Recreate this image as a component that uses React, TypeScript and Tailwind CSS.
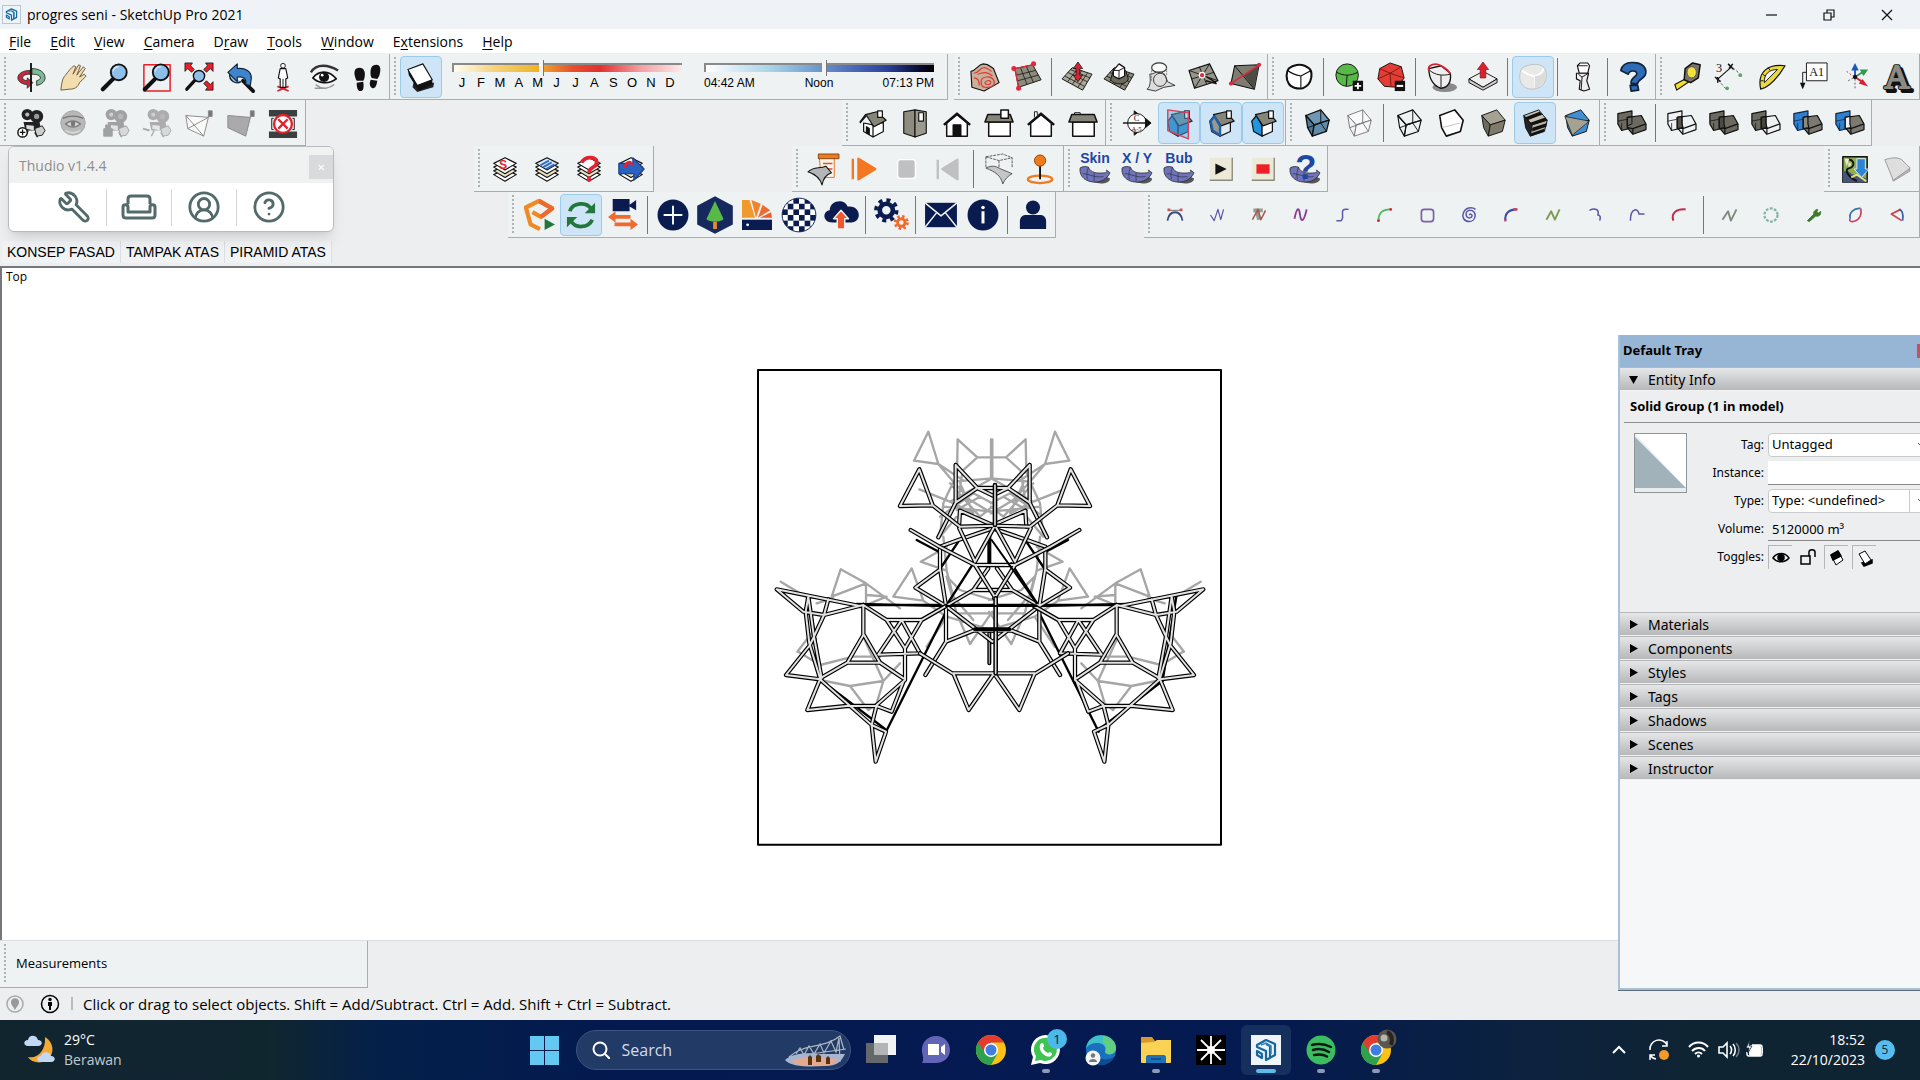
import React, { ReactNode } from "react";
import { Armchair, Wrench, CircleUserRound, CircleHelp } from "lucide-react";

const K = "#111";

function Svg({ children, size = 32 }: { children: ReactNode; size?: number }) {
  return (
    <svg width={size} height={size} viewBox="0 0 32 32" fill="none" strokeLinejoin="round" overflow="visible" aria-hidden="true">
      {children}
    </svg>
  );
}

/* ---------- shared drawing parts ---------- */

const Magnifier = () => (
  <g>
    <path d="M14 18 3 29" stroke={K} strokeWidth="4.5" strokeLinecap="round" />
    <circle cx="20" cy="11" r="8.5" fill="#8dbfe8" stroke={K} strokeWidth="2" />
    <path d="M14 10a6 6 0 0 1 6-5" stroke="#cfe6f8" strokeWidth="1.5" />
  </g>
);

const Reel = ({ c = "#222" }: { c?: string }) => (
  <g>
    <circle cx="12" cy="7" r="6" fill={c} />
    <circle cx="22" cy="9" r="7" fill={c} />
    <circle cx="12" cy="7" r="2.2" fill="#bbb" />
    <circle cx="22" cy="9" r="2.8" fill="#999" />
    <path d="M8 15h17l2 9H10z" fill={c} />
    <path d="M11 18l8 1v5l-8-2z" fill="#ddd" />
    <path d="M20 22l8-3 3 5-3 5-6 1z" fill="#ccc" stroke={c} />
    <path d="M13 24l-3 6m10-4 3 5" stroke={c} strokeWidth="1.5" />
  </g>
);

function Cube({ top, left, right, stroke = K, back = false, w = 1.4 }: { top: string; left: string; right: string; stroke?: string; back?: boolean; w?: number }) {
  return (
    <g stroke={stroke} strokeWidth={w}>
      <path d="M4 8 20 2 29 13 13 18z" fill={top} />
      <path d="M4 8 13 18 11 30 6 21z" fill={left} />
      <path d="M13 18 29 13 26 25 11 30z" fill={right} />
      {back && <path d="M6 21 20 16 20 2M20 16 26 25" strokeWidth="1" />}
    </g>
  );
}

function Solids({ a, b, mid, sa = K, sb = K }: { a: string; b: string; mid?: string; sa?: string; sb?: string }) {
  return (
    <g strokeWidth="1.3">
      <path d="M2 6 17 3v14l1 4-12 3-4-7z" fill={a} stroke={sa} />
      <path d="M2 14 17 11M6 24V16" stroke={sa} strokeWidth="0.8" />
      <path d="M12 10 27 8 32 17v6l-14 5-6-7z" fill={b} stroke={sb} />
      <path d="M12 21 18 22 32 17M18 22v6" stroke={sb} />
      {mid ? <path d="M12 10 17 9v8l1 4-6 1z" fill={mid} stroke={K} /> : <path d="M12 10 17 9v8l-5 2z" stroke={K} strokeWidth="1" />}
    </g>
  );
}

const IsoHouse = ({ wall = "#fff", side = "#fff", roof = "#85857a", line = K }) => (
  <g stroke={line} strokeWidth="1.3">
    <path d="M4 14 9 8 15 19v11l-9-5z" fill={wall} />
    <path d="M15 19 26 14v11l-11 5z" fill={side} />
    <path d="M8 7 21 4 30 14 16 19z" fill={roof} />
    <path d="M22 3h5v8h-5z" fill="#fff" />
  </g>
);

const Skin = ({ label, children }: { label?: string; children?: ReactNode }) => (
  <g>
    <path d="M8 27c8 6 24 6 24-1l-8-4z" fill="#555" />
    <path d="M0 15c3-2 6-2 9-1 2 6 9 7 18 6 2 0 2-2 1-3l4 3c-3 7-10 10-16 10C7 30-1 25 0 15z" fill="#6f74bd" stroke="#222" strokeWidth="0.8" />
    <path d="M3 21c7 0 13 5 22 3M9 14c-2 5-2 10-1 13m7-7v9" stroke="#222" strokeWidth="0.6" />
    {label && (
      <text x="16" y="10" textAnchor="middle" fontSize="15" fontWeight="bold" fill="#1d47a5" fontFamily="Liberation Sans, sans-serif">
        {label}
      </text>
    )}
    {children}
  </g>
);

const Layers = ({ top, children }: { top: string; children?: ReactNode }) => (
  <g stroke={K} strokeWidth="1.2">
    {[24, 20, 16, 12].map((y) => (
      <path key={y} d={`M4 ${y - 2} 16 ${y - 8} 28 ${y - 2} 16 ${y + 5}z`} fill={y === 12 ? top : y === 20 ? "#e9e0c4" : "#fff"} />
    ))}
    {children}
  </g>
);

const Grid = ({ fill = "#8d8b7c" }) => (
  <g stroke={K} strokeWidth="1">
    <path d="M0 18 11 6l21 7-10 17z" fill={fill} />
    <path d="m3 15 21 11M6 11l21 10M9 8l21 9M6 21l10-13M11 24l10-15M17 27l10-15" strokeWidth="0.8" />
  </g>
);

const House = ({ children, roof }: { children?: ReactNode; roof?: boolean }) => (
  <g stroke={K} strokeWidth="1.6">
    {roof ? (
      <>
        <path d="M5 15h23v15H5z" fill="#fff" />
        <path d="M4 7h24l3 8H1z" fill="#85857a" />
      </>
    ) : (
      <>
        <path d="M5 16 16 7l11 9v14H5z" fill="#fff" />
        <path d="M2 18 16 6l14 12" strokeWidth="2.6" />
      </>
    )}
    {children}
  </g>
);

/* ---------- icon library ---------- */

const R = "#d92231";
const NAVY = "#0a1c4f";
const curve = { stroke: "#5a57a8", strokeWidth: 1.6 };

const I: Record<string, ReactNode> = {
  Orbit: (
    <>
      <path d="M15 9C8 9 2 12 2 17c0 4 5 7 10 7v4l6-6-6-5v3c-3 0-5-2-5-3 0-3 4-4 8-4z" fill="#c4283c" stroke="#333" />
      <path d="M17 7c8 0 14 4 14 10 0 3-3 7-9 8v-5c3-1 4-2 4-3 0-3-4-4-9-4z" fill="#79bd97" stroke="#333" />
      <path d="M16 1v31" stroke={K} strokeWidth="2" />
    </>
  ),
  Pan: <path d="M3 30c1-6 1-12 5-16 3-4 6-8 9-10l2 1-3 8 6-10 2 1-4 10 7-9 2 2-6 9 5-3 2 2-7 7c-2 5-5 7-11 7z" fill="#f3dcae" stroke="#6b5a3c" />,
  Zoom: <Magnifier />,
  "Zoom Window": (
    <>
      <path d="M2 3h28v28H2z" stroke="#e8202a" strokeWidth="1.6" />
      <Magnifier />
    </>
  ),
  "Zoom Extents": (
    <>
      <path d="M12 19 3 29" stroke={K} strokeWidth="3.500" strokeLinecap="round" />
      <circle cx="16" cy="15" r="6" fill="#8dbfe8" stroke={K} strokeWidth="1.5" />
      {[[1, 1, 1, 1], [31, 1, -1, 1], [31, 30, -1, -1]].map(([x, y, a, b], i) => (
        <path key={i} transform={`translate(${x} ${y}) scale(${a} ${b})`} d="M0 0h8L6 3l4 4-3 3-4-4-3 3z" fill="#e8202a" stroke={K} strokeWidth="0.8" />
      ))}
    </>
  ),
  Previous: (
    <>
      <path d="M18 20l11 11" stroke={K} strokeWidth="4" strokeLinecap="round" />
      <path d="M4 13a8 8 0 0 0 12 8" stroke="#123" strokeWidth="1.5" fill="#8dbfe8" />
      <path d="M2 11 12 2v5c9-1 15 3 15 10l-1 8-5-1c1-6-2-9-9-8v5z" fill="#3d85cf" stroke="#123" strokeWidth="1.2" />
    </>
  ),
  "Position Camera": (
    <>
      <path d="m10 26 12 5M22 26l-12 5" stroke={R} strokeWidth="1.8" />
      <circle cx="16" cy="4" r="2.5" fill="#fff" stroke={K} />
      <path d="M13 7h6l2 10-2 1v9h-6v-9l-2-1z" fill="#fff" stroke={K} strokeWidth="1.2" />
      <path d="M16 18v9" stroke={K} />
    </>
  ),
  "Look Around": (
    <>
      <path d="M1 11C7 1 20 3 30 9" stroke="#333" strokeWidth="2.5" />
      <path d="M3 17C9 9 20 8 28 18 20 24 9 23 3 17z" fill="#fff" stroke={K} strokeWidth="1.8" />
      <circle cx="15" cy="16" r="5.4" fill={K} />
      <circle cx="13" cy="14" r="1.4" fill="#fff" />
      <path d="M6 24c6 5 13 5 20 0M5 28h13" stroke="#999" strokeWidth="1.4" />
    </>
  ),
  Walk: (
    <path d="M4 18C1 10 3 6 8 6s7 5 5 12l-1 2H5zM5 22l7-1c1 7 0 10-3 10s-4-4-4-9zM20 15c-1-8 1-12 6-12s5 6 3 12l-2 3-6-1zM20 19l7 1c-1 6-2 8-5 8-3-1-4-5-2-9z" fill={K} />
  ),
  "Show Shadows": (
    <>
      <path d="m8 22 22 0-1 5-17 5-5-5z" fill="#222" />
      <path d="M2 8 18 2 28 19 12 25z" fill="#fff" stroke={K} strokeWidth="1.2" />
      <path d="M12 25 28 19v5l-14 7zM2 8l10 17 1 5L3 14z" fill={K} />
    </>
  ),
  "From Contours": (
    <>
      <path d="M1 10C7 9 8 3 14 2c6 0 8 3 11 5l6 15-16 9-13-4z" fill="#c9b09d" stroke={K} strokeWidth="1.2" />
      <path d="M4 12c6 0 6-6 11-6 4 0 6 3 8 4M4 17c4 0 6 2 6 8m-2-12c5-1 9-4 16 2M12 22c-1-7 10-8 13-3s-2 9-8 8c-3 0-5-2-5-5zm4 0c1-2 5-3 6-1s-1 3-3 3-3-1-3-2z" stroke="#e23b33" strokeWidth="1.3" />
    </>
  ),
  "From Scratch": (
    <>
      <path d="M3 7 22 3l9 16-24 8z" fill="#8d8b7c" stroke={K} />
      <path d="m5 14 20-5M6 20l22-6M9 6l7 18M15 4l8 18" stroke={K} strokeWidth="0.8" />
      <path d="M22 3 3 7l4 20" stroke="#e2283a" strokeWidth="1.4" />
      <circle cx="23" cy="2" r="2.7" fill="#e2283a" />
      <circle cx="2" cy="7" r="2.7" fill="#e2283a" />
      <circle cx="7" cy="28" r="2.7" fill="#e2283a" />
    </>
  ),
  Smoove: (
    <>
      <Grid fill="#a9a797" />
      <path d="M17 0l5 7h-3v7h3l-5 7-5-7h3V7h-3z" fill={R} stroke={K} strokeWidth="0.8" />
    </>
  ),
  Stamp: (
    <>
      <Grid />
      <path d="M7 19c4 6 17 6 19-1l-3-9H10z" fill="#6c6a5e" stroke={K} />
      <path d="M10 9l6-7 6 4v9l-6 3-6-3z" fill="#fff" stroke={K} strokeWidth="1.3" />
      <path d="M16 9l6-3M16 9v9M16 9l-6 0" stroke={K} />
    </>
  ),
  Drape: (
    <>
      <path d="M4 13c5 0 6-3 11-3 5 1 6 6 8 11l8 4-12 2-9 4-9-2c4-2 4-11 3-16z" fill="#ddd" stroke="#333" />
      <ellipse cx="14" cy="6" rx="8" ry="5" fill="#fff" fillOpacity="0.6" stroke="#333" strokeWidth="1.3" />
      <path d="M6 6v14m16-14v8" stroke="#777" strokeDasharray="2 1" />
      <ellipse cx="15" cy="19" rx="7" ry="7" stroke="#333" />
    </>
  ),
  "Add Detail": (
    <>
      <path d="M1 9 23 2l9 18-25 8z" fill="#97958a" stroke={K} strokeWidth="1.2" />
      <path d="M1 9 32 20M23 2 7 28M4 18l24-7M12 5l8 19" stroke={K} strokeWidth="0.9" />
      <circle cx="15" cy="14" r="3.6" fill="#fff" />
      <circle cx="15" cy="14" r="2.2" fill="#e2283a" />
      <path d="M19 20l11 3-6-5M20 16l10 6" stroke={K} strokeWidth="1.5" />
    </>
  ),
  "Flip Edge": (
    <>
      <path d="M5 4 31 3 26 29 1 23z" fill="#7e7c70" stroke={K} strokeWidth="1.2" />
      <path d="M31 3 26 29 15 14z" fill="#4c4b44" />
      <path d="M5 4 26 29" stroke={K} />
      <path d="M1 23 31 3" stroke="#e2283a" strokeWidth="1.6" />
      <circle cx="31" cy="3" r="2.200" fill="#e2283a" />
      <circle cx="1" cy="23" r="2.200" fill="#e2283a" />
    </>
  ),
  "Outer Shell": (
    <>
      <path d="M5 7c5-4 12-5 17-3 7 3 8 6 7 13-1 6-4 9-9 11-6 1-13-1-15-5-3-5-3-12 0-16z" fill="#fff" stroke={K} strokeWidth="2.2" />
      <path d="M4 9c5 4 9 5 14 6l11-6M18 15v13" stroke={K} strokeWidth="1.2" />
    </>
  ),
  "Add Subdivision": (
    <>
      <circle cx="14" cy="14" r="12" fill="#58b948" stroke={K} />
      <path d="M3 11c7 4 15 4 22 0M14 14l-1 12" stroke={K} />
      <path d="M20 20h11v11H20z" fill={K} />
      <path d="M25.500 22v7M22 25.500h7" stroke="#fff" strokeWidth="2" />
    </>
  ),
  "Remove Subdivision": (
    <>
      <path d="M4 7 15 1l12 4 3 12-7 10-14-1-7-8z" fill="#e43d35" stroke={K} />
      <path d="m4 7 11 5 12-7M15 12l1 14M2 18l13-6 15 5" stroke="#7c1611" />
      <path d="M20 20h11v11H20z" fill={K} />
      <path d="M22 25.500h7" stroke="#fff" strokeWidth="2.200" />
    </>
  ),
  Crease: (
    <>
      <ellipse cx="20" cy="27" rx="13" ry="5" fill="#8a8a8a" />
      <path d="M3 7c0 12 6 19 13 21 8-1 11-7 10-16L16 4z" fill="#eee" stroke={K} strokeWidth="1.400" />
      <path d="M4 9c6 5 13 6 22 4M16 14v13" stroke={K} />
      <path d="M3 9c-2-7 8-8 13-5 4 2 8 4 10 9" stroke={R} strokeWidth="2" />
    </>
  ),
  "Push Pull": (
    <>
      <path d="m1 18 15-8 15 8-15 9z" fill="#eee" stroke={K} />
      <path d="m1 18 15 9 15-9v4l-15 8-15-8z" fill="#ccc" stroke={K} />
      <path d="m16 0 6 8h-3v9h-6V8h-3z" fill={R} stroke="#811" strokeWidth="0.700" />
    </>
  ),
  "Soft Cube": (
    <>
      <path d="M4 7c6-5 18-6 23-2 5 5 4 16-2 21-6 4-16 4-20-1-4-4-4-13-1-18z" fill="#e9e9e7" stroke="#bcc0c2" />
      <path d="M4 9c6 4 12 6 14 6 4 0 9-4 9-8" stroke="#fff" strokeWidth="2" />
      <path d="M18 15v12" stroke="#f8f8f8" strokeWidth="2" />
      <path d="M18 15c5 0 10-3 10-7 3 8 0 18-10 20z" fill="#dcdcda" />
    </>
  ),
  Figure: (
    <>
      <path d="M10 4 13 1h8l2 3-2 8h-9z" fill="#fff" stroke={K} strokeWidth="1.200" />
      <path d="M9 12h13l-2 8 3 9-6 2-5-2 1-9-4-2z" fill="#eee" stroke={K} strokeWidth="1.200" />
      <path d="M11 13l4 3-1 14M15 16l7-4M10 4h11" stroke={K} />
    </>
  ),
  Help3D: (
    <path d="M3 9C5 0 14 0 20 1c9 2 11 8 9 13-2 4-8 5-8 9l-7 0c-1-6 5-7 6-10 1-4-8-5-9 0zM13 25l8 0 1 5-8 1z" fill="#2e6cb5" stroke="#12233a" strokeWidth="1.800" />
  ),
  "Tape Measure": (
    <>
      <path d="M3 24 16 17l2 4-13 9z" fill="#f1dd2b" stroke={K} strokeWidth="1.200" />
      <path d="M14 7 22 1l8 2-2 14-8 5-7-3z" fill="#77756a" stroke={K} strokeWidth="1.600" />
      <ellipse cx="21" cy="11" rx="5" ry="6" fill="#f4e33c" stroke="#555" />
    </>
  ),
  Dimension: (
    <>
      <path d="M3 19 19 5" stroke={K} strokeWidth="1.200" />
      <path d="m1 16 6 5M4 22l0-6M15 2l6 6m-5-1 4-5" stroke={K} strokeWidth="1.600" />
      <path d="m4 19 9 10M20 6l9 8" stroke="#555" strokeDasharray="3 2" />
      <circle cx="14" cy="28" r="2" fill="#5aa469" />
      <circle cx="28" cy="14" r="2" fill="#5aa469" />
      <text x="2" y="11" fontSize="13" fill={K} fontFamily="Liberation Serif, serif">3</text>
    </>
  ),
  Protractor: (
    <>
      <path d="M5 29C1 10 13 2 31 4L25 13C18 22 12 28 5 29z" fill="#ecd93c" stroke={K} strokeWidth="1.300" />
      <path d="M9 22C8 13 14 8 23 8z" fill="#f0f3f5" stroke={K} />
      <path d="M5 20h3M7 13l3 2m3-9 2 3" stroke={K} />
    </>
  ),
  "Text Label": (
    <>
      <path d="M9 1h22v19H9z" fill="#fff" stroke={K} />
      <text x="20" y="15" textAnchor="middle" fontSize="13" fill={K} fontFamily="Liberation Serif, serif">A1</text>
      <path d="M9 11H5v12" stroke={K} />
      <path d="M2 22h6l-3 7z" fill={K} />
    </>
  ),
  Axes: (
    <>
      <path d="M16 16V6" stroke="#2255b8" strokeWidth="2" />
      <path d="m12 9 4-8 4 8z" fill="#2255b8" />
      <path d="m16 16 8-5" stroke="#2f9a4c" strokeWidth="2" />
      <path d="m21 8 9 0-5 7z" fill="#2f9a4c" />
      <path d="m16 16 9 6" stroke={R} strokeWidth="2" />
      <path d="m20 23 10 3-6-8z" fill={R} />
      <path d="M16 18v10M14 17l-7 4" stroke="#555" strokeDasharray="2 2" />
      <path d="m7 10 7 5" stroke={R} strokeDasharray="2 2" />
      <circle cx="16" cy="16" r="2.300" fill={K} />
    </>
  ),
  "3D Text": (
    <>
      <text x="19" y="31" textAnchor="middle" fontSize="37" fill="#111" stroke={K} strokeWidth="4" fontFamily="Liberation Serif, serif">A</text>
      <text x="16" y="28" textAnchor="middle" fontSize="37" fill="#8b8b83" stroke="#111" strokeWidth="4" fontFamily="Liberation Serif, serif">A</text>
      <text x="16" y="28" textAnchor="middle" fontSize="37" fill="#8b8b83" stroke="#8b8b83" strokeWidth="2" fontFamily="Liberation Serif, serif">A</text>
    </>
  ),

  "Create Camera": (
    <>
      <Reel />
      <circle cx="7" cy="26" r="5" fill="#fff" stroke={K} strokeWidth="1.500" />
      <path d="M4 26h6M7 23v6" stroke={K} strokeWidth="1.300" />
    </>
  ),
  "Look Through": (
    <>
      <circle cx="16" cy="16" r="13" fill="#b8b8b8" stroke="#a5a5a5" />
      <path d="M5 11c7-3 15-3 22 0" stroke="#777" strokeWidth="1.500" />
      <path d="M8 17c5-4 11-4 16 0-5 4-11 4-16 0z" stroke="#777" strokeWidth="1.500" fill="#ddd" />
      <circle cx="16" cy="17" r="2.500" fill="#777" />
      <path d="M8 24c5 3 11 3 16 0" stroke="#ddd" strokeWidth="1.500" />
    </>
  ),
  "Lock Camera": (
    <g opacity="0.65">
      <Reel c="#777" />
      <path d="M4 22h9v8H4zM6 22v-4h5v4" fill="#777" stroke="#777" />
    </g>
  ),
  "Show Cameras": (
    <g opacity="0.65">
      <Reel c="#888" />
      <path d="m1 22 7 2" stroke="#888" strokeWidth="2" />
    </g>
  ),
  "Frustum Lines": (
    <g stroke="#888">
      <path d="M2 8 26 10 21 30 4 22z" fill="#fafafa" />
      <path d="M2 8 21 30M4 22l22-12M26 10l3-5" />
      <path d="M26 3h4v6h-4z" fill="#777" />
    </g>
  ),
  "Frustum Volume": (
    <g stroke="#888">
      <path d="M2 8 26 10 21 30 2 21z" fill="#aaa" />
      <path d="M26 10l3-5" />
      <path d="M26 3h4v6h-4z" fill="#777" />
    </g>
  ),
  "Clear Aspect": (
    <>
      <path d="M1 2h30v7H1zM1 25h30v7H1z" fill="#3a4040" />
      <path d="M6 11H4v12h2M26 11h2v12h-2" stroke={K} />
      <circle cx="16" cy="17" r="9.500" fill="#fff" stroke="#e2222e" strokeWidth="2.500" />
      <path d="m11 12 10 10M21 12 11 22" stroke="#e2222e" strokeWidth="2.500" />
    </>
  ),
  Iso: (
    <g stroke={K} strokeWidth="1.300">
      <path d="M6 16v9l10 6V18zM16 31l11-6V15l-11 4z" fill="#fff" />
      <path d="M2 15 8 7l12-3 10 9-13 7L9 8" fill="#85857a" />
      <path d="M9 8 2 16M21 3h5v7h-5z" fill="#fff" />
      <path d="M9 20v6l3 2v-6z" fill={K} />
    </g>
  ),
  Top: (
    <g stroke={K} strokeWidth="1.200">
      <path d="M4 4 16 2v29L4 27z" fill="#8e8c7e" />
      <path d="M16 2l12 2v23l-12 4z" fill="#9c9a8c" />
      <path d="M20 5h5v9h-5z" fill="#fff" />
    </g>
  ),
  Front: (
    <House>
      <path d="M12 18h8v12h-8z" fill={K} />
    </House>
  ),
  Right: (
    <House roof>
      <path d="M18 2h8v9h-8z" fill="#fff" />
    </House>
  ),
  Back: (
    <House>
      <path d="M9 10V4h3v4" fill="#fff" strokeWidth="1" />
    </House>
  ),
  Left: (
    <House roof>
      <path d="M7 7V5h6v2" strokeWidth="1" />
    </House>
  ),
  "Section Plane": (
    <g stroke={K}>
      <path d="M13 3l9 7v12l-9 7z" fill={K} />
      <circle cx="16" cy="16" r="10" fill="#fff" />
      <path d="M1 16h28" strokeWidth="1.500" />
      <path d="M25 11l6 5-6 5z" fill={K} />
      <text x="15.500" y="14" textAnchor="middle" fontSize="9" fill={K} stroke="none" fontFamily="Liberation Serif, serif">C</text>
      <text x="15.500" y="24" textAnchor="middle" fontSize="7" fill={K} stroke="none" fontFamily="Liberation Serif, serif">A-5</text>
    </g>
  ),
  "Display Planes": (
    <>
      <IsoHouse wall="#3d8fcb" side="#3d8fcb" roof="#6f8f9c" line="#234" />
      <path d="M4 2 26 5v28L4 24z" fill="#4aa2dd" fillOpacity="0.350" stroke="#d9435a" strokeWidth="1.500" />
    </>
  ),
  "Display Cuts": (
    <>
      <IsoHouse side="#dfeaf2" />
      <path d="M5 14 9 9 15 19v10l-8-5z" fill="#9a988c" stroke="#1d5fae" strokeWidth="2.500" />
    </>
  ),
  "Display Fill": <IsoHouse wall="#1e96e0" side="#fff" />,
  "X-Ray": <Cube top="#6d97b2" left="#4d7b99" right="#5f8cab" back />,
  "Back Edges": <Cube top="#fafafa" left="#f4f4f4" right="#f8f8f8" stroke="#777" back w={1} />,
  Wireframe: <Cube top="none" left="none" right="none" back w={1.2} />,
  "Hidden Line": (
    <>
      <path d="M4 8 20 2 29 13 26 25 11 30 6 21z" fill="#fff" stroke={K} strokeWidth="1.700" />
      <path d="m6 21 20-5" stroke="#aaa" strokeWidth="0.700" />
    </>
  ),
  Shaded: <Cube top="#a5a291" left="#6d6b5e" right="#7e7b6c" w={1} />,
  Textured: (
    <>
      <Cube top="#c9c2b2" left="#222" right="#b9b2a2" w={1} />
      <path d="M5 10 21 4l3 3L8 13zM10 16l17-6 2 3-16 5zM13 21l16-5-1 4-15 5zM12 27l14-5v3l-15 5z" fill={K} />
    </>
  ),
  Monochrome: (
    <>
      <Cube top="#3f8fd2" left="#2e78ba" right="#3f8fd2" w={1} />
      <path d="M3 9 29 14 11 29z" fill="#a5a291" stroke={K} strokeWidth="0.700" />
    </>
  ),
  "Solid Shell": <Solids a="#6c6a60" b="#6c6a60" />,
  Intersect: <Solids a="none" b="none" mid="#55534a" />,
  Union: <Solids a="#6c6a60" b="#6c6a60" mid="#4c4b44" />,
  Subtract: <Solids a="#6c6a60" b="none" mid="#45443e" />,
  Trim: <Solids a="#2f80cf" b="#7c7a70" mid="#8d8b80" sa="#0d2748" />,
  Split: <Solids a="#2f80cf" b="#7c7a70" mid="#f0f3f5" sa="#0d2748" />,

  "Layer Stack": (
    <Layers top="#fff">
      <text x="14" y="16" textAnchor="middle" fontSize="13" fontWeight="bold" fill="#e2222e" stroke="none" fontFamily="Liberation Sans, sans-serif">S</text>
    </Layers>
  ),
  "Layer Info": (
    <Layers top="#dbe8fa">
      <path d="M9 12 18 7M12 14l9-5M15 16l9-5" stroke="#2d69c4" strokeWidth="2" />
    </Layers>
  ),
  "Layer Help": (
    <Layers top="#fff">
      <path d="M8 9c5-8 18-6 16 1-1 5-8 4-8 10m0 4v5" stroke="#e2222e" strokeWidth="4" />
    </Layers>
  ),
  "Layer Export": (
    <Layers top="#fff">
      <path d="M3 10h15V4l12 12-11 12v-7H3z" fill="#2a62c2" stroke="#1a3f88" />
      <path d="M10 14c0-6 7-7 7-2" stroke="#e2222e" strokeWidth="3" />
    </Layers>
  ),
  Script: (
    <>
      <path d="M12 3h16v22H14z" fill="#fbf3ea" stroke="#d8722a" strokeWidth="1" />
      <path d="M11 0h22v5H11z" fill="#ee7c22" stroke="#84400c" />
      <path d="M16 10h10M16 16h10" stroke="#e0502a" strokeWidth="1.600" />
      <path d="M0 19c6-6 12-3 19-6l6 7c-6 2-9 7-10 13-2-7-6-11-15-14z" fill="#b3b5b8" stroke={K} strokeWidth="1.200" />
    </>
  ),
  Play: <path d="M3 5v22M9 5l18 11L9 27z" fill="#f47721" stroke="#f47721" strokeWidth="2.500" />,
  Stop: <path d="M9 6h13a3 3 0 0 1 3 3v14a3 3 0 0 1-3 3H9a3 3 0 0 1-3-3V9a3 3 0 0 1 3-3z" fill="#bfc0c1" stroke="#fff" strokeWidth="1.500" />,
  Rewind: <path d="M4 6v21M25 6v21L9 16z" fill="#bfc0c1" stroke="#bfc0c1" strokeWidth="2.500" />,
  Drop: (
    <g stroke="#555">
      <path d="M2 3 20 0l10 4v10M2 3v12M2 3l14 4 14-3M16 7v12" strokeDasharray="3 1" />
      <path d="M2 15c8-4 12-1 16 1l12 5c-4 2-8 6-10 11-2-9-8-13-18-17z" fill="#c4c6c7" />
    </g>
  ),
  Pin: (
    <>
      <ellipse cx="15" cy="27" rx="13" ry="4" stroke="#f07a1c" strokeWidth="2.500" />
      <path d="M15 12v15" stroke={K} strokeWidth="2" />
      <circle cx="15" cy="7" r="6" fill="#f07a1c" stroke="#8d430a" />
    </>
  ),
  Skin: <Skin label="Skin" />,
  "X/Y": <Skin label="X / Y" />,
  Bub: <Skin label="Bub" />,
  "Run Bubble": (
    <>
      <path d="M4 4h24v24H4z" fill="#ece9d8" />
      <path d="M28 4v24H4" stroke="#8d8b7c" strokeWidth="1.500" />
      <path d="m10 10 12 6-12 6z" fill={K} />
    </>
  ),
  "Stop Bubble": (
    <>
      <path d="M4 4h24v24H4z" fill="#ece9d8" />
      <path d="M28 4v24H4" stroke="#8d8b7c" strokeWidth="1.500" />
      <path d="M9 11h14v10H9z" fill="#ee1f27" />
    </>
  ),
  "Skin Help": (
    <Skin>
      <text x="17" y="27" textAnchor="middle" fontSize="37" fontWeight="bold" fill="#1d47a5" fontFamily="Liberation Sans, sans-serif">?</text>
    </Skin>
  ),
  "Add Location": (
    <>
      <path d="M3 3h26v27H3z" fill="#8fae4f" stroke={K} strokeWidth="1.500" />
      <path d="M3 20c5-6 8 2 12 2l14 4v4H3z" fill="#44557c" />
      <path d="M8 6c8-1 8 8 2 9s-2 9 8 14" stroke={K} strokeWidth="2" />
      <path d="M5 5h5l-3 8zM9 9c4 0 3 4 0 5z" fill="#e8ecd4" />
      <path d="M12 25l6-3 10 7" stroke="#e8e06a" strokeWidth="2" />
      <path d="M18 5h9v11h4l-8 9-8-9h3z" fill="#2f83d4" stroke="#dfeefb" />
    </>
  ),
  "Toggle Terrain": (
    <>
      <path d="M10 20 29 14l1 4-18 11z" fill="#b9b9b9" stroke="#999" />
      <path d="M3 6c7-2 13-3 18 0l9 9-18 13z" fill="#dedede" stroke="#999" />
    </>
  ),

  Enscape: (
    <>
      <path d="M9 13 18 18 30 9 16 1 2 8 7 26 17 31" stroke="#f08a24" strokeWidth="4.500" />
      <path d="M18 18 30 9 16 1" stroke="#ec6a30" strokeWidth="4.500" />
      <path d="M22 20l11 6-11 6z" fill="#23773a" />
    </>
  ),
  Sync: (
    <g stroke="#23773a" strokeWidth="4">
      <path d="M4 12c3-9 18-11 23-2M28 21c-4 9-18 10-23 1" />
      <path d="M31 3v11H20zM1 29V18h11z" fill="#23773a" stroke="none" />
    </g>
  ),
  "Sync Camera": (
    <>
      <path d="M5-1h18v13H5zM23 5l7-5v11l-7-4z" fill={NAVY} />
      <path d="M0 18 8 12v4h16v4H8v4zM32 26l-8 6v-4H7v-4h17v-4z" fill="#ee6a2e" />
    </>
  ),
  Add: (
    <>
      <circle cx="16" cy="16" r="16.500" fill={NAVY} />
      <path d="M16 6v20M6 16h20" stroke="#fff" strokeWidth="2" />
    </>
  ),
  "Asset Library": (
    <>
      <path d="M16-4 35 6v20l-19 10-19-10V6z" fill="#16295e" />
      <path d="m16 1 9 19c-1 4-17 4-18 0z" fill="#58b948" />
      <path d="M14 23h4v8h-4z" fill="#e98a2a" />
    </>
  ),
  "Material Editor": (
    <>
      <path d="M0 0h8l6 19H0z" fill="#f09a2e" />
      <path d="m10 0 10 4-5 15z" fill="#f0832e" />
      <path d="m22 5 8 6-13 8z" fill="#ee6a2e" />
      <path d="m31 13 1 6H19z" fill="#ee5a2e" />
      <path d="M0 21h32v11H0z" fill={NAVY} />
      <circle cx="6" cy="26.500" r="1.500" fill="#fff" />
    </>
  ),
  Panorama: (
    <>
      <clipPath id="globe"><circle cx="16" cy="16" r="18" /></clipPath>
      <g clipPath="url(#globe)">
        <path d="M-2-2h36v36H-2z" fill="#fff" />
        {[0, 1, 2, 3, 4, 5].map((r) =>
          [0, 1, 2].map((c) => <rect key={`${r}-${c}`} x={-2 + c * 12 + (r % 2) * 6} y={-2 + r * 6} width="6" height="6" fill={NAVY} />)
        )}
      </g>
      <circle cx="16" cy="16" r="18" stroke={NAVY} />
    </>
  ),
  Upload: (
    <>
      <path d="M7 24C-4 24-4 12 4 11 4 0 20-2 23 7c9-1 12 5 12 9s-3 8-8 8z" fill={NAVY} />
      <path d="m16 11 8 9h-4v11h-8V20H8z" fill="#ee5a2e" stroke="#f0f3f5" strokeWidth="1.500" />
    </>
  ),
  Settings: (
    <>
      <circle cx="11" cy="11" r="7" stroke={NAVY} strokeWidth="5" />
      <circle cx="11" cy="11" r="11" stroke={NAVY} strokeWidth="4" strokeDasharray="4.300 4.300" />
      <circle cx="27" cy="24" r="4" stroke="#ee6a2e" strokeWidth="3" />
      <circle cx="27" cy="24" r="6.500" stroke="#ee6a2e" strokeWidth="3" strokeDasharray="2.600 2.500" />
    </>
  ),
  Feedback: (
    <>
      <path d="M-1 3h34v26H-1z" fill={NAVY} />
      <path d="m-1 3 17 14L33 3M-1 29l12-15M33 29 21 14" stroke="#f0f3f5" strokeWidth="1.600" />
    </>
  ),
  About: (
    <>
      <circle cx="16" cy="16" r="16.500" fill={NAVY} />
      <path d="M16 12v13" stroke="#fff" strokeWidth="3.200" />
      <circle cx="16" cy="8" r="1.900" fill="#fff" />
    </>
  ),
  Account: (
    <>
      <circle cx="16" cy="8" r="7.500" fill={NAVY} />
      <path d="M2 31V23c0-5 3-7 7-7h14c4 0 7 2 7 7v8z" fill={NAVY} />
    </>
  ),

  "Classic Bezier": (
    <>
      <path d="M8 22c2-12 14-12 16 0" {...curve} strokeWidth="2" stroke="#3a4a80" />
      <path d="M9 11h14" stroke="#666" />
      <path d="M8 9h3v3H8zM21 9h3v3h-3z" fill="#c55" />
    </>
  ),
  Polyline: <path d="m9 16 4 6 4-12 3 11 3-11" {...curve} strokeWidth="1.300" />,
  "Edit Bezier": (
    <>
      <path d="M10 11h10M13 9l3 12" stroke="#9a9a92" strokeWidth="4" />
      <path d="m9 21 6-11 3 11 5-10" {...curve} stroke="#a05a50" />
    </>
  ),
  "Uniform Spline": <path d="M9 20c3-14 5-12 6-4s4 8 7-6" {...curve} stroke="#8a3e90" strokeWidth="2" />,
  "Cubic Bezier": <path d="M22 10c-12-2-3 8-8 12H9" {...curve} />,
  "F-Spline": (
    <>
      <path d="M9 22c0-8 4-12 12-12" stroke="#57b868" strokeWidth="1.800" />
      <circle cx="9" cy="22" r="1.500" fill={R} />
      <circle cx="22" cy="10" r="1.500" fill={R} />
    </>
  ),
  "Round Corner": <rect x="10" y="10" width="13" height="13" rx="3" stroke="#7a62a8" strokeWidth="1.800" />,
  Spiral: <path d="M16 16c3-3 5 2 1 3-5 1-6-8 0-8 8 0 7 12-1 12-5 0-8-5-6-9 2-6 9-7 13-4" {...curve} />,
  Arc: (
    <>
      <path d="M10 22c-1-8 4-12 12-12" {...curve} stroke="#3d4aa8" strokeWidth="2.200" />
      <path d="M10 23v-3M19 10h4" stroke="#c8405c" strokeWidth="2.200" />
    </>
  ),
  "Polyline Divider": <path d="m9 21 5-9 4 9 5-11" stroke="#7d9a50" strokeWidth="2" />,
  Catenary: <path d="M10 11c6-3 11-1 9 5 3 0 3 3 2 6" {...curve} />,
  Dome: <path d="M9 22c0-15 9-13 9-7h6" {...curve} />,
  "Red Arc": <path d="M10 22c-3-8 4-13 13-12" stroke="#c22c50" strokeWidth="2.200" />,
  "Zig Zag": <path d="m9 21 6-9 3 10 6-12" stroke="#7b8a7a" strokeWidth="2" />,
  "Circle Nodes": <circle cx="16" cy="16" r="7" stroke="#86b0a8" strokeWidth="2.400" strokeDasharray="3 1.500" />,
  "Spline Wrench": (
    <path d="M10 22 17 15c-1-3 2-5 4-5l-1 3 2 1 2-2c1 4-2 6-5 5l-7 6z" fill="#3e7a2c" stroke="#3e7a2c" />
  ),
  "Closed Curve": (
    <>
      <path d="M11 20C9 14 15 8 22 9" stroke="#3a74a8" strokeWidth="1.800" />
      <path d="M22 9c2 8-3 14-9 14-3 0-3-2-2-3" stroke="#d04060" strokeWidth="1.800" />
    </>
  ),
  Pie: (
    <>
      <path d="M20 10 10 15l11 7" stroke="#d04050" strokeWidth="1.800" />
      <path d="M18 10c4 1 5 6 4 12" stroke="#3a62a8" strokeWidth="1.800" />
    </>
  ),
};

/* ---------- toolbars ---------- */

function Bar({ items, active = [], className = "", children }: { items?: string[]; active?: string[]; className?: string; children?: ReactNode }) {
  return (
    <div role="toolbar" className={`flex h-[46px] shrink-0 items-center border-r border-b border-[#a9adb1] bg-[#eff2f3] pr-px ${className}`}>
      <div className="ml-1 mr-1 h-10 w-0.5 shrink-0 bg-[repeating-linear-gradient(to_bottom,#aeb2b5_0_2px,transparent_2px_4px)]" />
      {items?.map((n, i) =>
        n === "|" ? (
          <div key={i} className="ml-[3px] mr-1 h-[38px] w-px bg-[#777]" />
        ) : (
          <button
            key={i}
            aria-label={n}
            className={`flex h-[42px] w-[42px] items-center justify-center ${active.includes(n) ? "rounded-sm border border-[#9ccbe9] bg-[#cde5f6]" : ""}`}
          >
            <Svg size={30}>{I[n]}</Svg>
          </button>
        )
      )}
      {children}
    </div>
  );
}

const thumb =
  "[&::-webkit-slider-thumb]:h-4 [&::-webkit-slider-thumb]:w-[5px] [&::-webkit-slider-thumb]:appearance-none [&::-webkit-slider-thumb]:border-r [&::-webkit-slider-thumb]:border-[#777] [&::-webkit-slider-thumb]:bg-[#f4f4f4]";

function Toolbars() {
  return (
    <div className="pt-px font-['Liberation_Sans',Arial,sans-serif]">
      <div className="flex">
        <Bar items={["Orbit", "Pan", "Zoom", "Zoom Window", "Zoom Extents", "Previous", "Position Camera", "Look Around", "Walk"]} />
        <Bar items={["Show Shadows"]} active={["Show Shadows"]}>
          <div className="ml-2.5 flex w-[230px] flex-col">
            <input
              type="range" aria-label="Month" defaultValue="38"
              className={`h-[9px] w-full appearance-none border-t-2 border-l-2 border-[#8a8a8a] bg-[linear-gradient(90deg,#fffdf0,#f5d27a_18%,#f0b428_36%,#e8502c_52%,#e23030_64%,#f3a0a4_82%,#fdeaea)] ${thumb}`}
            />
            <div className="mt-[3px] flex justify-between pr-1.5 pl-1 text-[13px] leading-4">
              {"JFMAMJJASOND".split("").map((m, i) => (
                <span key={i} className="w-3 text-center">{m}</span>
              ))}
            </div>
          </div>
          <div className="ml-[22px] mr-3 flex w-[230px] flex-col">
            <input
              type="range" aria-label="Time of day" defaultValue="52"
              className={`h-[9px] w-full appearance-none border-t-2 border-l-2 border-[#8a8a8a] bg-[linear-gradient(90deg,#fff,#a8d4ea_28%,#6f9bd0_48%,#4a68b8_65%,#2a3f98_80%,#070a2c_94%,#000)] ${thumb}`}
            />
            <div className="mt-[3px] grid grid-cols-3 text-[12px] leading-4">
              <span>04:42 AM</span>
              <span className="text-center">Noon</span>
              <span className="text-right">07:13 PM</span>
            </div>
          </div>
        </Bar>
        <Bar className="ml-1.5" items={["From Contours", "From Scratch", "|", "Smoove", "Stamp", "Drape", "Add Detail", "Flip Edge"]} />
        <Bar
          items={["Outer Shell", "|", "Add Subdivision", "Remove Subdivision", "|", "Crease", "Push Pull", "|", "Soft Cube", "|", "Figure", "|", "Help3D"]}
          active={["Soft Cube"]}
        />
        <Bar className="ml-auto" items={["Tape Measure", "Dimension", "Protractor", "Text Label", "Axes", "3D Text"]} />
      </div>
      <div className="flex">
        <Bar items={["Create Camera", "Look Through", "Lock Camera", "Show Cameras", "Frustum Lines", "Frustum Volume", "Clear Aspect"]} />
        <Bar className="ml-[536px]" items={["Iso", "Top", "Front", "Right", "Back", "Left"]} />
        <Bar items={["Section Plane", "Display Planes", "Display Cuts", "Display Fill"]} active={["Display Planes", "Display Cuts", "Display Fill"]} />
        <Bar items={["X-Ray", "Back Edges", "|", "Wireframe", "Hidden Line", "Shaded", "Textured", "Monochrome"]} active={["Textured"]} />
        <Bar items={["Solid Shell", "|", "Intersect", "Union", "Subtract", "Trim", "Split"]} />
      </div>
      <div className="flex">
        <Bar className="ml-[474px]" items={["Layer Stack", "Layer Info", "Layer Help", "Layer Export"]} />
        <Bar className="ml-[138px]" items={["Script", "Play", "Stop", "Rewind", "|", "Drop", "Pin"]} />
        <Bar items={["Skin", "X/Y", "Bub", "Run Bubble", "Stop Bubble", "Skin Help"]} />
        <Bar className="ml-auto" items={["Add Location", "Toggle Terrain"]} />
      </div>
      <div className="flex">
        <Bar
          className="ml-[508px]"
          items={["Enscape", "Sync", "Sync Camera", "|", "Add", "Asset Library", "Material Editor", "Panorama", "Upload", "|", "Settings", "|", "Feedback", "About", "|", "Account"]}
          active={["Sync"]}
        />
        <Bar
          className="ml-auto"
          items={["Classic Bezier", "Polyline", "Edit Bezier", "Uniform Spline", "Cubic Bezier", "F-Spline", "Round Corner", "Spiral", "Arc", "Polyline Divider", "Catenary", "Dome", "Red Arc", "|", "Zig Zag", "Circle Nodes", "Spline Wrench", "Closed Curve", "Pie"]}
        />
      </div>
      <nav aria-label="Scenes" className="flex h-[28px] items-start pt-[3px] pl-0.5 text-[14px]">
        {["KONSEP FASAD", "TAMPAK ATAS", "PIRAMID ATAS"].map((t) => (
          <button key={t} className="h-[22px] border-r border-[#dcdfe1] bg-[#f0f2f3] px-[5px]">{t}</button>
        ))}
      </nav>
    </div>
  );
}

/* ---------- 3D model ---------- */

const faceHalf = "M538 358 480 468 578 466zM578 466 660 530 765 527M512 540 598 590 705 645H765M705 645 767 745M658 535 705 635 762 532";
const hornHalf = "M647 345V458L595 562M647 345 712 414H757M712 414 647 458M712 414 757 436M660 482 757 525M660 482 657 530";
const bodyHalf =
  "M600 590V655L618 768M598 660 526 713 618 768 700 720H757M600 590 655 570 757 535M618 768 757 875M618 768V875L556 975M618 875 700 842H757M700 720 745 655";
const baseHalf = "M762 970H640L686 1080 762 970M640 972 540 910";
const wingHalf =
  "M360 768 110 718 190 785 252 795 265 748M252 795 370 765M205 740 197 785 208 880 240 985M252 795 210 885 138 975 240 988 202 1080 320 1068 410 1068 455 1085 490 995M205 740 222 860 245 985M370 765V855L322 938 240 985M322 938H420L372 855M420 938 490 985M370 765 440 810H545L618 768M545 810 495 895V990L410 1065 395 1125 240 988M395 1125 407 1235 438 1145zM540 910 485 810 415 914zM440 810 495 895";
const ghostTop =
  "M565 245 522 332 595 342zM595 342 640 395 610 460 600 560M595 342 668 390M653 268 651 370M653 268 712 322H757M712 322 668 362M757 268V385L640 395M538 418 630 455 757 385M610 470 757 485M630 400 720 500 757 470M668 362 650 480 720 440M640 395 690 450 757 490M600 500 700 430 757 460M630 455 700 490 660 400M600 560 650 500M620 590 542 635 620 662 640 740M610 560 620 662";
const ghostLow =
  "M302 658 275 740 378 700zM378 700V765L440 740 380 735M378 700 480 775M515 655 460 740 550 752zM550 752 620 800 560 890M122 695 200 742 280 745M172 905 215 850M175 905 240 945 340 920H420M240 990 330 1008 430 993 410 1060 385 1080 330 1008M370 860 430 993M620 680 650 790 690 882 757 785M620 680 660 720 757 750M650 790H757M620 800 757 840M640 740 700 810M430 993 480 940M280 745 230 760";
const darkHalf = "M350 765H757M350 762 618 768M618 785 438 1145M240 988 435 1137M205 740 245 985M700 838H757M618 768 700 640M598 660 655 575M530 570 598 606";

function Half({ d, c, outer = "#000", inner }: { d: string; c: number; outer?: string; inner?: string }) {
  return (
    <g>
      {[undefined, `translate(${2 * c} 0) scale(-1 1)`].map((t, i) => (
        <path key={i} transform={t} d={d} stroke={outer} strokeWidth={inner ? 13 : 7} />
      ))}
      {inner &&
        [undefined, `translate(${2 * c} 0) scale(-1 1)`].map((t, i) => (
          <path key={i} transform={t} d={d} stroke={inner} strokeWidth="6" />
        ))}
    </g>
  );
}

function Model() {
  return (
    <svg width="500" height="510" viewBox="0 0 1500 1530" fill="none" strokeLinejoin="round" strokeLinecap="round" role="img" aria-label="Top view of model">
      <Half d={ghostTop} c={755} outer="#a6a6a6" />
      <Half d={ghostLow} c={752} outer="#a6a6a6" />
      <Half d={darkHalf} c={757} />
      <path d="M748 850V940M748 560V640" stroke="#000" strokeWidth="12" />
      <path d="M748 850V940" stroke="#999" strokeWidth="4" />
      <Half d={bodyHalf} c={758} inner="#e2e2e2" />
      <Half d={wingHalf} c={750} inner="#e2e2e2" />
      <Half d={baseHalf} c={762} inner="#e2e2e2" />
      <Half d={hornHalf} c={758} inner="#e2e2e2" />
      <Half d={faceHalf} c={765} inner="#e2e2e2" />
      <path d="M765 405V525M767 745V970" stroke="#000" strokeWidth="14" />
      <path d="M765 405V525M767 745V970" stroke="#ddd" strokeWidth="5" />
      <path d="M755 570 890 760M618 768H890" stroke="#000" strokeWidth="6" />
      <path d="M705 838H808" stroke="#000" strokeWidth="12" />
      <rect x="54" y="60" width="1389" height="1424" stroke="#000" strokeWidth="6" />
    </svg>
  );
}

/* ---------- Default Tray ---------- */

function TrayHeader({ title, open }: { title: string; open?: boolean }) {
  return (
    <button className="flex h-[24px] w-full items-center gap-2.5 border-t border-b border-t-[#b4b6b8] border-b-[#f2f2f2] bg-linear-to-b from-[#e6e7e8] to-[#b7b8b9] pl-[9px] text-left text-[14px]">
      <svg width="9" height="9" viewBox="0 0 9 9" aria-hidden="true">
        <path d={open ? "M0 1h9L4.500 9z" : "M1 0 9 4.500 1 9z"} />
      </svg>
      {title}
    </button>
  );
}

function TraySelect({ id, value, boxed }: { id: string; value: string; boxed?: boolean }) {
  return (
    <div className="relative h-6">
      <select id={id} className="h-full w-full appearance-none rounded-sm border border-[#c8cacc] bg-white pl-[3px] text-[13px]">
        <option>{value}</option>
      </select>
      <span className={`pointer-events-none absolute inset-y-0 right-0 flex w-[27px] items-center justify-center ${boxed ? "border border-[#c8cacc]" : ""}`}>
        <svg width="9" height="7" viewBox="0 0 9 7" fill="none" aria-hidden="true">
          <path d="m0 1 4.500 4.500L9 1" stroke="#555" />
        </svg>
      </span>
    </div>
  );
}

function Tray() {
  return (
    <aside className="absolute top-[335px] -right-4 z-10 flex h-[655px] w-[318px] flex-col border-l-2 border-b-2 border-[#a9c0d6] bg-[#f5f7f8] font-['Noto_Sans',sans-serif] shadow-[0_1px_0_#5b6b78]">
      <div className="flex h-8 shrink-0 items-center justify-between bg-[#97b5d5] pr-[3px] pl-[3px]">
        <h2 className="text-[13px] font-bold">Default Tray</h2>
        <button aria-label="Close tray" className="h-3.5 w-4 bg-[#c9505a]" />
      </div>
      <TrayHeader title="Entity Info" open />
      <section className="h-[221px] shrink-0 bg-[#edeef0]">
        <h3 className="ml-1 flex h-8 items-center border-b border-[#8c8f92] pl-1.5 text-[13px] font-bold">Solid Group (1 in model)</h3>
        <div className="flex pt-2.5 pl-3.5">
          <div className="h-[60px] w-[53px] shrink-0 border border-[#8f9498] bg-[#e8eef0]">
            <svg width="51" height="54" viewBox="0 0 51 54" aria-hidden="true">
              <path d="M0 0h51v54z" fill="#fff" />
              <path d="M0 3v51h51z" fill="#a1b2bb" />
            </svg>
          </div>
          <div className="grid grow grid-cols-[77px_1fr] items-center gap-x-1 gap-y-1 text-[12px]">
            <label htmlFor="tag" className="text-right">Tag:</label>
            <TraySelect id="tag" value="Untagged" />
            <label htmlFor="instance" className="text-right">Instance:</label>
            <input id="instance" className="h-6 w-full border-b border-[#888] bg-white px-1" />
            <label htmlFor="type" className="text-right">Type:</label>
            <TraySelect id="type" value="Type: <undefined>" boxed />
            <label htmlFor="volume" className="text-right">Volume:</label>
            <input id="volume" readOnly defaultValue="5120000 m³" className="h-6 w-full border-b border-[#888] bg-[#edeef0] px-1 text-[13px]" />
            <span className="text-right">Toggles:</span>
            <div className="flex gap-1">
              {["Hidden", "Locked", "Receive shadows", "Cast shadows"].map((n, i) => (
                <button key={n} aria-label={n} className={`flex h-6 w-6 items-center justify-center ${i === 1 ? "" : "border-t border-l border-[#b4b6b8]"}`}>
                  <svg width="18" height="18" viewBox="0 0 18 18" fill="none" stroke="#000" strokeWidth="1.500" aria-hidden="true">
                    {i === 0 && <><path d="M1 9c4-6 12-6 16 0-4 5-12 5-16 0z" /><circle cx="9" cy="8.500" r="3" fill="#000" /></>}
                    {i === 1 && <path d="M2 8h9v8H2zM10 8V4c0-3 6-3 6 0v5" />}
                    {i === 2 && <><path d="M3 6 10 2l5 9-7 5z" fill="#fff" strokeWidth="1" /><path d="m3 6 7-4 3 5-8 4z" fill="#000" /></>}
                    {i === 3 && <><path d="m6 14 10-3v3l-8 3z" fill="#000" /><path d="M3 5 9 2l6 9-6 4z" fill="#fff" strokeWidth="1" /></>}
                  </svg>
                </button>
              ))}
            </div>
          </div>
        </div>
      </section>
      {["Materials", "Components", "Styles", "Tags", "Shadows", "Scenes", "Instructor"].map((t) => (
        <TrayHeader key={t} title={t} />
      ))}
    </aside>
  );
}

/* ---------- Thudio floating window ---------- */

function Thudio() {
  return (
    <section className="absolute top-[146px] left-2 z-10 h-[86px] w-[326px] overflow-hidden rounded-md border border-[#b9bcbe] bg-white shadow-lg">
      <div className="flex h-[36px] items-center justify-between bg-[#f0f2f2] pl-2.5 text-[14px] text-[#8e8e8e]">
        Thudio v1.4.4
        <button aria-label="Close" className="mt-1 h-6 w-6 bg-[#d8dadb] text-[10px] text-white">✕</button>
      </div>
      <div className="flex h-[48px] items-center pl-[32px] text-[#536a6b]">
        {[Wrench, Armchair, CircleUserRound, CircleHelp].map((Ico, i) => (
          <button key={i} aria-label={["Tools", "Furniture", "Account", "Help"][i]} className={`flex h-[37px] w-[65px] items-center justify-center ${i ? "border-l border-[#d2d6d8]" : ""}`}>
            {i === 1 ? (
              <svg width="36" height="28" viewBox="0 0 36 28" fill="none" stroke="currentColor" strokeWidth="3" strokeLinejoin="round" aria-hidden="true">
                <path d="M7 11V6c0-2 1-3 3-3h16c2 0 3 1 3 3v5M7 19v-5c0-3-5-3-5 0v8c0 2 1 3 3 3h26c2 0 3-1 3-3v-8c0-3-5-3-5 0v5z" />
              </svg>
            ) : i === 0 ? (
              <Ico size={34} strokeWidth={2} className="-scale-x-100" />
            ) : (
              <Ico size={34} strokeWidth={2} />
            )}
          </button>
        ))}
      </div>
    </section>
  );
}

/* ---------- taskbar ---------- */

const SketchUpMark = ({ size }: { size: number }) => (
  <svg width={size} height={size} viewBox="0 0 30 30" fill="none" aria-hidden="true">
    <path d="M0 0h30v30H0z" fill="#eef4f8" />
    <path d="M6 12v-2l9-5 9 4v11l-9 5v-9l-9-4zM15 9l4 2v11M6 16v4l5 3v-4z" stroke="#17679f" strokeWidth="2.200" strokeLinejoin="round" />
    <path d="M10 10l5-2 5 3v8" stroke="#2b86c4" strokeWidth="1.500" />
  </svg>
);

const Chrome = () => (
  <>
    <circle cx="15" cy="15" r="15" fill="#fbc116" />
    <path d="M2 7.500A15 15 0 0 0 15 30l6.500-11.300L15 15z" fill="#2da14c" />
    <path d="M2 7.500 9 18l6-10.500h13A15 15 0 0 0 2 7.500z" fill="#e33b2e" />
    <circle cx="15" cy="15" r="7" fill="#fff" />
    <circle cx="15" cy="15" r="5.500" fill="#3f7de0" />
  </>
);

const apps: { name: string; dot?: boolean; active?: boolean; art: ReactNode }[] = [
  { name: "Task view", art: <><path d="M0 8h22v20H0z" fill="#66696c" /><path d="M8 0h22v20H8z" fill="#f1f3f5" /><path d="M8 8h14v12H8z" fill="#b2b4b5" /></> },
  { name: "Chat", art: <><path d="M1 28C3 25 2 22 1 17 0 8 6 1 15 1s14 7 14 14-6 13-14 13z" fill="#6264b8" /><path d="M7 9h11v11H7zM20 12l4-3v11l-4-3z" fill="#fff" /></> },
  { name: "Chrome", art: <Chrome /> },
  {
    name: "WhatsApp", dot: true,
    art: (
      <>
        <path d="m0 30 2-8A14.500 14.500 0 1 1 9 28z" fill="#fff" />
        <path d="m4 26 1-5a11.500 11.500 0 1 1 5 4z" fill="#3fc351" />
        <path d="M9 10c2-4 4-1 4 1l-1 2c1 3 3 4 5 5l2-1c2 1 3 2 1 4-5 3-13-5-11-11z" fill="#fff" />
        <circle cx="26" cy="4" r="10" fill="#4db8ea" />
        <text x="26" y="9" textAnchor="middle" fontSize="13" fill="#08203a">1</text>
      </>
    ),
  },
  {
    name: "Edge",
    art: (
      <>
        <circle cx="15" cy="15" r="15" fill="#1a6fc0" />
        <path d="M0 14C1-4 29-4 30 13c0 7-9 8-11 4 2-5-2-9-7-9S2 9 0 14z" fill="#3ec0c8" />
        <path d="M17 1c9 1 13 7 13 12 0 7-9 8-11 4 2-4 1-8-2-9z" fill="#62cf80" />
        <path d="M10 15c0 9 9 12 18 7-3 6-9 9-15 8-6-2-7-11-3-15z" fill="#0f4b91" />
        <circle cx="7" cy="23" r="7.500" fill="#f3f4f5" />
        <circle cx="7" cy="20.500" r="2.200" fill="#777" />
        <path d="M3 27c0-4 8-4 8 0z" fill="#777" />
      </>
    ),
  },
  {
    name: "File Explorer", dot: true,
    art: (
      <>
        <path d="M0 2h11l3 4h16v10H0z" fill="#d99a2b" />
        <path d="M0 8l13-1 3-2h14v22c0 1-1 1-1 1H1s-1 0-1-1z" fill="#fad355" />
        <path d="M5 28v-6c0-1 1-2 2-2h16c1 0 2 1 2 2v6z" fill="#1d72b8" />
        <path d="M10 24h10" stroke="#0d4b80" strokeWidth="1.500" />
      </>
    ),
  },
  {
    name: "Starburst",
    art: (
      <>
        <path d="M0 0h30v30H0z" fill="#000" />
        <path d="M15 1v28M1 15h28M5 5l20 20M25 5 5 25" stroke="#fff" strokeWidth="1.800" />
        <circle cx="15" cy="15" r="4" fill="#fff" />
      </>
    ),
  },
  { name: "SketchUp", active: true, art: <SketchUpMark size={30} /> },
  { name: "Spotify", dot: true, art: <><circle cx="15" cy="15" r="14.500" fill="#3dbd62" /><path d="M6 10c7-2 13-1 19 2M7 15c6-2 11-1 16 2M8 20c5-1 9-1 13 1.500" stroke="#0a1a10" strokeWidth="2.500" strokeLinecap="round" fill="none" /></> },
  { name: "Chrome profile", dot: true, art: <><Chrome /><circle cx="26" cy="4" r="9.500" fill="#5a5650" /><circle cx="23" cy="3" r="3.500" fill="#b8b5aa" /><path d="M26-3c5 2 6 8 4 13" stroke="#2a2420" strokeWidth="4" fill="none" /></> },
];

function Taskbar() {
  return (
    <footer className="grid h-[60px] shrink-0 grid-cols-[1fr_auto_1fr] items-center bg-[linear-gradient(90deg,#11252f_0%,#10262f_14%,#03204a_20%,#04194f_32%,#041a50_66%,#0b2140_78%,#0f2433_88%)] text-white">
      <div className="flex items-center gap-2 pl-6">
        <svg width="32" height="32" viewBox="0 0 32 32" aria-hidden="true">
          <path d="M21 3c10 6 10 19 0 24-6 3-14 1-17-4 10 2 18-7 17-20z" fill="#f4a836" />
          <path d="M4 12c-5 0-5-6 0-6 1-6 9-5 10 0 5 0 5 6 0 6z" fill="#c3d8f5" />
          <path d="M17 28c-5 0-5-6 0-6 1-5 9-5 10 0 5 0 5 6 0 6z" fill="#c3d8f5" />
        </svg>
        <div className="text-[14px] leading-5">
          <div>29°C</div>
          <div className="text-[#c3cad0]">Berawan</div>
        </div>
      </div>
      <div className="flex items-center">
        <button aria-label="Start" className="flex h-[60px] w-[55px] items-center justify-center">
          <svg width="29" height="29" viewBox="0 0 29 29" aria-hidden="true">
            <path d="M0 0h14v14H0zM15 0h14v14H15zM0 15h14v14H0zM15 15h14v14H15z" fill="#63c8f2" />
          </svg>
        </button>
        <label className="mr-[3px] ml-1 flex h-10 w-[275px] items-center overflow-hidden rounded-full border border-[#3d5480] bg-[#223a66] pl-[15px]">
          <svg width="18" height="18" viewBox="0 0 18 18" fill="none" stroke="#fff" strokeWidth="2" aria-hidden="true">
            <circle cx="8" cy="8" r="6.500" /><path d="m13 13 4.500 4.500" strokeLinecap="round" />
          </svg>
          <input aria-label="Search" placeholder="Search" className="ml-3 w-[120px] bg-transparent text-[16px] outline-none placeholder:text-[#d3dbea]" />
          <svg className="ml-auto" width="66" height="34" viewBox="0 0 66 34" fill="none" aria-hidden="true">
            <path d="M1 27c6-6 20-8 30-6h30c-4 8-8 12-20 12-16 1-34 1-40-6z" fill="#a9b4d2" />
            <path d="M8 28c10-5 30-3 46-2-3 6-8 7-20 7-12 0-22 0-26-5z" fill="#e5a98f" />
            <path d="M5 24 62 16M5 24C20 10 40 16 56 3l4 14M12 21l4-6 4 7 5-9 5 8 6-10 4 9 7-12 5 11 3-14 1 24" stroke="#aab8c4" strokeWidth="1.200" />
            <path d="M24 32v-8l2-2 2 2v8zM32 29v-6l2-2 3 2v6zM42 31v-6l2-2 2 2v6z" fill="#57340f" />
          </svg>
        </label>
        {apps.map((a) => (
          <button key={a.name} aria-label={a.name} className="flex h-[60px] w-[55px] items-center justify-center">
            <span className={`relative flex h-[50px] w-[50px] items-center justify-center rounded-md ${a.active ? "bg-[#15305c]" : ""}`}>
              <svg width="30" height="30" viewBox="0 0 30 30" overflow="visible" aria-hidden="true">{a.art}</svg>
              {(a.dot || a.active) && <span className={`absolute bottom-0.5 h-1 rounded-full ${a.active ? "w-5 bg-[#63b9ea]" : "w-2 bg-[#8d99b5]"}`} />}
            </span>
          </button>
        ))}
      </div>
      <div className="flex items-center justify-end pr-[25px]">
        <svg width="152" height="24" viewBox="0 0 152 24" fill="none" stroke="#fff" strokeWidth="2" className="mr-7" aria-hidden="true">
          <path d="m2 15 6-6 6 6" />
          <path d="M39 12a9 9 0 0 1 17-5M56 3v5h-5M45 21a9 9 0 0 1-6-4M39 22v-5h5" strokeWidth="1.500" />
          <circle cx="53" cy="17" r="5" fill="#f59a2c" stroke="none" />
          <path d="M78 9c5-6 14-6 19 0M81 13c4-4 10-4 13 0M84 16c2-2 5-2 7 0" />
          <circle cx="87.500" cy="18" r="1.500" fill="#fff" stroke="none" />
          <path d="M108 9h4l4-4v14l-4-4h-4zM119 8c2 2 2 6 0 8M122 6c3 3 3 9 0 12" strokeWidth="1.600" />
          <path d="M125 5c4 4 4 10 0 14" stroke="#6b7a88" strokeWidth="1.500" />
          <rect x="138" y="7" width="12" height="11" rx="2" fill="#fff" stroke="none" />
          <path d="M141 7h8a2 2 0 0 1 2 2v7a2 2 0 0 1-2 2h-11a2 2 0 0 1-2-2v-2M152 10v5" strokeWidth="1.500" />
          <path d="M139 2 135 10h3l-1 5 4-7h-3z" fill="#fff" stroke="#0f2433" strokeWidth="0.800" />
        </svg>
        <div className="text-right text-[14px] leading-5">
          <div>18:52</div>
          <div>22/10/2023</div>
        </div>
        <span className="ml-2.5 flex h-5 w-5 items-center justify-center rounded-full bg-[#57bdf0] text-[12px] text-[#0d2433]">5</span>
      </div>
    </footer>
  );
}

/* ---------- page ---------- */

const menu: [string, string, string][] = [
  ["", "F", "ile"], ["", "E", "dit"], ["", "V", "iew"], ["", "C", "amera"], ["D", "r", "aw"], ["", "T", "ools"], ["", "W", "indow"], ["E", "x", "tensions"], ["", "H", "elp"],
];

export default function App() {
  return (
    <div className="relative flex min-h-screen flex-col overflow-hidden bg-[#eceef0] font-['Open_Sans','Noto_Sans',sans-serif] text-black">
      <header className="flex h-[29px] items-center bg-[#eff3f8] pr-1 pl-0.5 text-[14px]">
        <span className="mr-1.5 border border-[#b5c6d4]"><SketchUpMark size={17} /></span>
        <h1>progres seni - SketchUp Pro 2021</h1>
        <div className="ml-auto flex">
          {["M1 6h11", "M1 4h7v7H1zM4 4V1h7v7H8", "M1 1l10 10M11 1 1 11"].map((d, i) => (
            <button key={d} aria-label={["Minimize", "Restore", "Close"][i]} className="flex h-[29px] w-[58px] items-center justify-center">
              <svg width="12" height="12" viewBox="0 0 12 12" fill="none" stroke="#111" strokeWidth="1.200" aria-hidden="true"><path d={d} /></svg>
            </button>
          ))}
        </div>
      </header>
      <nav aria-label="Menu" className="flex h-[24px] items-center gap-[19px] bg-white pl-[9px] text-[14px]">
        {menu.map(([a, b, c]) => (
          <button key={a + b + c}>{a}<span className="underline underline-offset-2">{b}</span>{c}</button>
        ))}
      </nav>
      <Toolbars />
      <main className="relative grow border-t-2 border-l-2 border-[#75787b] bg-white">
        <span className="absolute top-0 left-1 text-[12px]">Top</span>
        <div className="absolute top-[82px] left-[738px]"><Model /></div>
      </main>
      <div className="flex h-[48px] shrink-0 border-t border-[#dcdedf]">
        <div className="flex w-[368px] items-center border-r border-b border-[#a9adb1] bg-[#eff2f3] text-[13px]">
          <div className="ml-1 h-10 w-0.5 bg-[repeating-linear-gradient(to_bottom,#aeb2b5_0_2px,transparent_2px_4px)]" />
          <label htmlFor="measurements" className="ml-2.5">Measurements</label>
          <input id="measurements" className="ml-auto h-6 w-[196px] bg-transparent" />
        </div>
      </div>
      <div className="flex h-8 shrink-0 items-center text-[15px]">
        <svg width="76" height="20" viewBox="0 0 76 20" fill="none" className="mr-[7px]" aria-hidden="true">
          <circle cx="15" cy="10" r="8" stroke="#aaa" strokeWidth="1.500" />
          <path d="M15 16c-2-4-4-5-4-8 0-5 8-5 8 0 0 3-2 4-4 8z" fill="#999" />
          <circle cx="50" cy="10" r="8.500" stroke="#000" strokeWidth="1.500" />
          <circle cx="50" cy="5.500" r="1.700" fill="#000" />
          <path d="M48 8h4v4h-1v4h-2v-4h-1z" fill="#000" />
          <path d="M72 3v13" stroke="#888" />
        </svg>
        Click or drag to select objects. Shift = Add/Subtract. Ctrl = Add. Shift + Ctrl = Subtract.
      </div>
      <Taskbar />
      <Tray />
      <Thudio />
    </div>
  );
}
